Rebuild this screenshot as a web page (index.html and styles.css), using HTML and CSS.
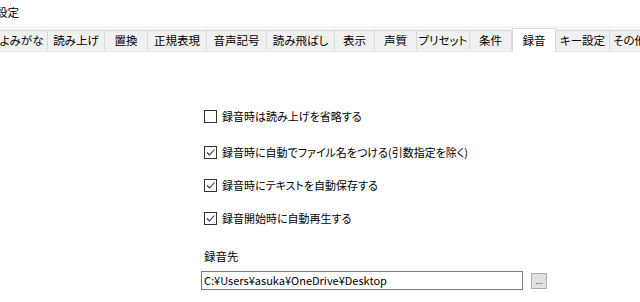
FILE: index.html
```html
<!DOCTYPE html>
<html lang="ja">
<head>
<meta charset="utf-8">
<link rel="stylesheet" href="styles.css">
</head>
<body>
<div class="window">
  <div class="title">設定</div>
  <div class="tabstrip">
    <div class="tabs">
      <div class="tab t1">よみがな</div>
      <div class="tab t2">読み上げ</div>
      <div class="tab t3">置換</div>
      <div class="tab t4">正規表現</div>
      <div class="tab t5">音声記号</div>
      <div class="tab t6">読み飛ばし</div>
      <div class="tab t7">表示</div>
      <div class="tab t8">声質</div>
      <div class="tab t9">プリセット</div>
      <div class="tab t10">条件</div>
      <div class="tab t11 selected">録音</div>
      <div class="tab t12">キー設定</div>
      <div class="tab t13">その他</div>
    </div>
  </div>
  <div class="panel">
    <div class="options">
      <label class="check r1"><span class="box"></span><span>録音時は読み上げを省略する</span></label>
      <label class="check r2"><span class="box checked"><svg viewBox="0 0 11 11" width="11" height="11"><path d="M2 5.5 L4.5 8 L9.5 2.5" fill="none" stroke="#333" stroke-width="1.1"/></svg></span><span>録音時に自動でファイル名をつける(引数指定を除く)</span></label>
      <label class="check r3"><span class="box checked"><svg viewBox="0 0 11 11" width="11" height="11"><path d="M2 5.5 L4.5 8 L9.5 2.5" fill="none" stroke="#333" stroke-width="1.1"/></svg></span><span>録音時にテキストを自動保存する</span></label>
      <label class="check r4"><span class="box checked"><svg viewBox="0 0 11 11" width="11" height="11"><path d="M2 5.5 L4.5 8 L9.5 2.5" fill="none" stroke="#333" stroke-width="1.1"/></svg></span><span>録音開始時に自動再生する</span></label>
      <div class="dest-label">録音先</div>
      <div class="dest-row">
        <div class="path">C:¥Users¥asuka¥OneDrive¥Desktop</div>
        <div class="browse">...</div>
      </div>
    </div>
  </div>
</div>
</body>
</html>
```
FILE: styles.css
```css
html, body {
  margin: 0;
  padding: 0;
  background: #ffffff;
}
body {
  width: 640px;
  height: 302px;
  overflow: hidden;
  font-family: "Noto Sans CJK JP", "Noto Sans", sans-serif;
  font-size: 11.5px;
  font-feature-settings: "palt";
  color: #000;
}
.window {
  display: flex;
  flex-direction: column;
  height: 302px;
}
.title {
  height: 26px;
  line-height: 24px;
  text-indent: -4px;
  background: #ffffff;
}
.tabstrip {
  height: 23px;
  background: #f7f7f7;
  padding-top: 2px;
  border-bottom: 1px solid #e3e3e3;
  position: relative;
}
.tabs {
  display: flex;
  margin-left: -4px;
  height: 21px;
  margin-top: 2px;
}
.tab {
  box-sizing: border-box;
  height: 20px;
  line-height: 19px;
  text-align: center;
  background: #f0f0f0;
  border: 1px solid #d9d9d9;
  border-left: none;
  border-bottom: none;
  white-space: nowrap;
  flex: none;
}
.t1 { width: 52px; }
.t2 { width: 57px; }
.t3 { width: 43px; }
.t4 { width: 59px; }
.t5 { width: 60px; }
.t6 { width: 68px; }
.t7 { width: 40px; }
.t8 { width: 42px; }
.t9 { width: 53px; }
.t10 { width: 42px; }
.t11 { width: 44px; }
.t12 { width: 54px; }
.t13 { width: 40px; }
.tab.selected {
  background: #ffffff;
  height: 24px;
  margin-top: -2px;
  line-height: 22px;
  border-left: 1px solid #d9d9d9;
  position: relative;
  z-index: 1;
}
.panel {
  flex: 1;
  background: #ffffff;
}
.options {
  display: flex;
  flex-direction: column;
  padding-left: 204px;
  padding-top: 56px;
  font-size: 11px;
}
.check {
  display: flex;
  align-items: center;
  height: 16px;
  line-height: 16px;
}
.r2 { margin-top: 20px; }
.r3 { margin-top: 17px; }
.r4 { margin-top: 17px; }
.box {
  box-sizing: border-box;
  width: 13px;
  height: 13px;
  border: 1px solid #333333;
  background: #fff;
  margin-right: 5px;
  display: flex;
  align-items: center;
  justify-content: center;
  flex: none;
}
.box svg { display: block; }
.dest-label {
  margin-top: 22px;
  height: 16px;
  line-height: 16px;
  font-size: 11.5px;
}
.dest-row {
  display: flex;
  align-items: center;
  margin-top: 7px;
  margin-left: -3px;
}
.path {
  box-sizing: border-box;
  width: 322px;
  height: 19px;
  line-height: 17px;
  border: 1px solid #7a7a7a;
  padding-left: 2px;
  font-size: 11px;
  font-feature-settings: normal;
  font-family: "Noto Sans CJK JP", sans-serif;
}
.browse {
  box-sizing: border-box;
  width: 16px;
  height: 16px;
  margin-left: 8px;
  background: #e1e1e1;
  border: 1px solid #adadad;
  font-size: 8px;
  line-height: 16px;
  text-align: center;
  color: #333;
  font-family: "DejaVu Sans", sans-serif;
}
```
